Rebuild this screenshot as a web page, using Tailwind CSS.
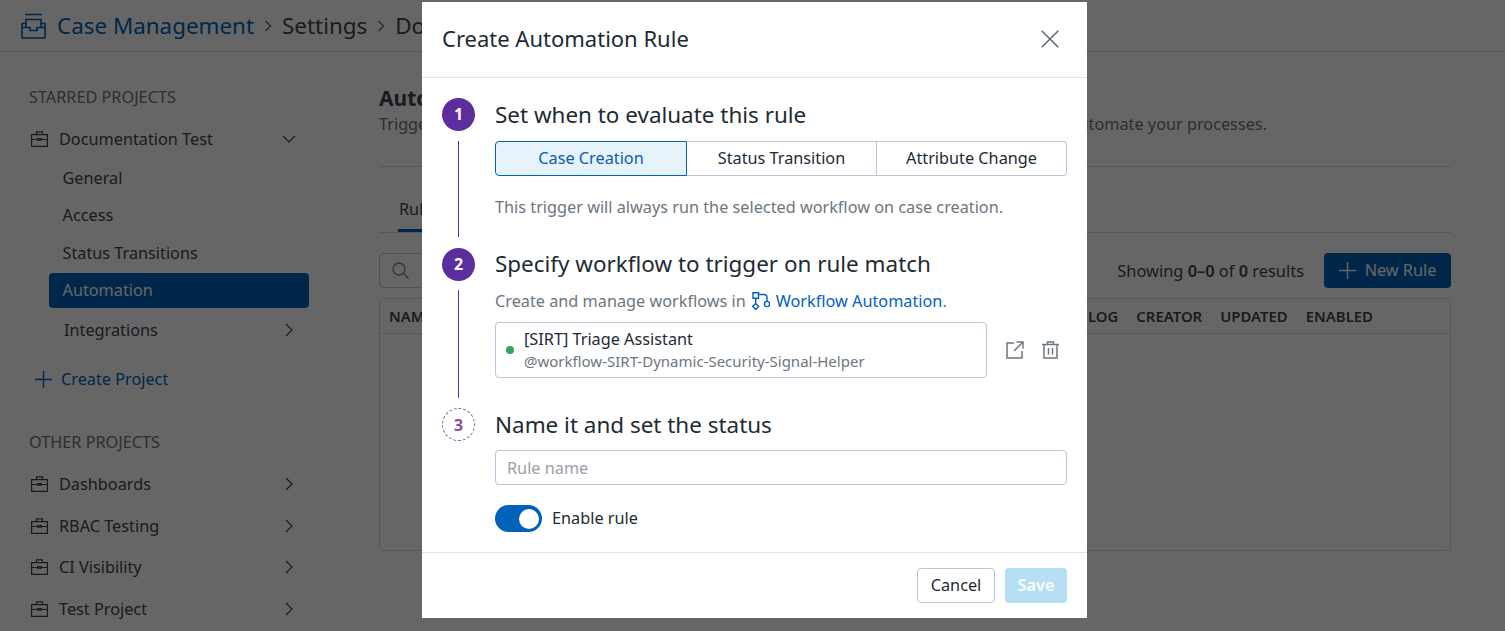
<!DOCTYPE html>
<html lang="en">
<head>
<meta charset="UTF-8">
<title>Create Automation Rule</title>
<script src="https://cdn.jsdelivr.net/npm/@tailwindcss/browser@4"></script>
</head>
<body class="relative h-[631px] overflow-hidden bg-white font-['Noto_Sans',sans-serif] text-[16.25px] text-[#3c4650]">
  <!-- Page header -->
  <header class="flex h-[52px] items-center border-b border-[#d8dbe6] pl-[21px] text-[22.4px]">
    <svg class="h-[26px] w-[25px] text-[#0062b8]" viewBox="0 0 25 26" fill="none" stroke="currentColor" stroke-width="1.6">
      <path d="M4 1.500h17M5 14V6.500h15V14M1 10.500V25h23V10.500H20M1 10.500h4M1 14.500h8v3h7v-3h8"/>
    </svg>
    <span class="ml-[11px] text-[#0062b8]">Case Management</span>
    <svg class="mx-[10px] h-3 w-2 text-[#5c6670]" viewBox="0 0 8 12" fill="none" stroke="currentColor" stroke-width="1.2"><path d="M1.500 1l5 5-5 5"/></svg>
    <span>Settings</span>
    <svg class="mx-[10px] h-3 w-2 text-[#5c6670]" viewBox="0 0 8 12" fill="none" stroke="currentColor" stroke-width="1.2"><path d="M1.500 1l5 5-5 5"/></svg>
    <span>Documentation Test</span>
  </header>

  <div class="flex">
    <!-- Sidebar -->
    <aside class="w-[379px] shrink-0 pl-[29px]">
      <div class="mt-[34px] h-[22px] leading-[22px] text-[#6b7580]">STARRED PROJECTS</div>
      <div class="mt-[12px] flex h-[38px] w-[267px] items-center pl-[2px]">
        <svg class="h-[16px] w-[17px] shrink-0" viewBox="0 0 17 16" fill="none" stroke="currentColor" stroke-width="1.2"><path d="M.6 3.600h15.800v11.800H.6zM5.500 3.600V.8h6v2.800M.6 8.500h6M10.400 8.500h6M6.600 7.600h3.800v1.600H6.600z"/></svg>
        <span class="ml-[11px] flex-1">Documentation Test</span>
        <svg class="h-2 w-3.5" viewBox="0 0 14 8" fill="none" stroke="currentColor" stroke-width="1.2"><path d="M1 1l6 6 6-6"/></svg>
      </div>
      <div class="mt-[2.5px] flex h-[35px] items-center pl-[33.5px]">General</div>
      <div class="mt-[2px] flex h-[35px] items-center pl-[33.5px]">Access</div>
      <div class="mt-[3px] flex h-[35px] items-center pl-[33.5px]">Status Transitions</div>
      <div class="ml-[20px] mt-[2.5px] flex h-[35px] w-[260px] items-center rounded-[4px] bg-[#0062b8] pb-[1px] pl-[13.5px] text-white">Automation</div>
      <div class="mt-[4px] flex h-[36px] w-[264px] items-center pl-[35px]">
        <span class="flex-1">Integrations</span>
        <svg class="h-3.5 w-2" viewBox="0 0 8 14" fill="none" stroke="currentColor" stroke-width="1.2"><path d="M1 1l6 6-6 6"/></svg>
      </div>
      <div class="mt-[13px] flex h-[36px] items-center pl-[6px] text-[#0062b8]">
        <svg class="h-[17px] w-[17px]" viewBox="0 0 17 17" fill="none" stroke="currentColor" stroke-width="1.4"><path d="M8.500 0v17M0 8.500h17"/></svg>
        <span class="ml-[9px]">Create Project</span>
      </div>
      <div class="mt-[34px] h-[22px] leading-[22px] text-[#6b7580]">OTHER PROJECTS</div>
      <div class="mt-[12px] flex h-[38px] w-[264px] items-center pl-[2px]">
        <svg class="h-[16px] w-[17px] shrink-0" viewBox="0 0 17 16" fill="none" stroke="currentColor" stroke-width="1.2"><path d="M.6 3.600h15.800v11.800H.6zM5.500 3.600V.8h6v2.800M.6 8.500h6M10.400 8.500h6M6.600 7.600h3.800v1.600H6.600z"/></svg>
        <span class="ml-[11px] flex-1">Dashboards</span>
        <svg class="h-3.5 w-2" viewBox="0 0 8 14" fill="none" stroke="currentColor" stroke-width="1.2"><path d="M1 1l6 6-6 6"/></svg>
      </div>
      <div class="mt-[4px] flex h-[38px] w-[264px] items-center pl-[2px]">
        <svg class="h-[16px] w-[17px] shrink-0" viewBox="0 0 17 16" fill="none" stroke="currentColor" stroke-width="1.2"><path d="M.6 3.600h15.800v11.800H.6zM5.500 3.600V.8h6v2.800M.6 8.500h6M10.400 8.500h6M6.600 7.600h3.800v1.600H6.600z"/></svg>
        <span class="ml-[11px] flex-1">RBAC Testing</span>
        <svg class="h-3.5 w-2" viewBox="0 0 8 14" fill="none" stroke="currentColor" stroke-width="1.2"><path d="M1 1l6 6-6 6"/></svg>
      </div>
      <div class="mt-[3px] flex h-[38px] w-[264px] items-center pl-[2px]">
        <svg class="h-[16px] w-[17px] shrink-0" viewBox="0 0 17 16" fill="none" stroke="currentColor" stroke-width="1.2"><path d="M.6 3.600h15.800v11.800H.6zM5.500 3.600V.8h6v2.800M.6 8.500h6M10.400 8.500h6M6.600 7.600h3.800v1.600H6.600z"/></svg>
        <span class="ml-[11px] flex-1">CI Visibility</span>
        <svg class="h-3.5 w-2" viewBox="0 0 8 14" fill="none" stroke="currentColor" stroke-width="1.2"><path d="M1 1l6 6-6 6"/></svg>
      </div>
      <div class="mt-[4px] flex h-[38px] w-[264px] items-center pl-[2px]">
        <svg class="h-[16px] w-[17px] shrink-0" viewBox="0 0 17 16" fill="none" stroke="currentColor" stroke-width="1.2"><path d="M.6 3.600h15.800v11.800H.6zM5.500 3.600V.8h6v2.800M.6 8.500h6M10.400 8.500h6M6.600 7.600h3.800v1.600H6.600z"/></svg>
        <span class="ml-[11px] flex-1">Test Project</span>
        <svg class="h-3.5 w-2" viewBox="0 0 8 14" fill="none" stroke="currentColor" stroke-width="1.2"><path d="M1 1l6 6-6 6"/></svg>
      </div>
    </aside>

    <!-- Main -->
    <main class="w-[1072px] shrink-0">
      <h1 class="mt-[32px] h-[28px] text-[21px] font-bold leading-[28px]">Automation Rules</h1>
      <div class="flex h-[24px] w-[888px] justify-between leading-[24px] text-[#6b7580]"><span>Trigger</span><span>automate your processes.</span></div>
      <div class="mt-[30px] border-b border-[#d8dbe6]"></div>
      <div class="flex h-[66px] items-end border-b border-[#d8dbe6] pl-[19px]">
        <div class="border-b-[3px] border-[#0062b8] px-px pb-[9px] leading-[22px]">Rules</div>
      </div>
      <div class="mt-[20px] flex items-center">
        <div class="flex h-[35px] w-[700px] items-center rounded-[4px] border border-[#c4cada] pl-[12px]">
          <svg class="h-[17px] w-[17px] text-[#7b858f]" viewBox="0 0 17 17" fill="none" stroke="currentColor" stroke-width="1.3"><circle cx="7" cy="7" r="6"/><path d="M11.500 11.500l5 5"/></svg>
        </div>
        <div class="ml-auto pt-[1px] text-[16.4px]">Showing <b class="font-semibold">0–0</b> of <b class="font-semibold">0</b> results</div>
        <div class="ml-[20px] flex h-[35px] w-[127px] items-center justify-center rounded-[4px] bg-[#0062b8] pb-[1px] text-white">
          <svg class="h-[17px] w-[17px]" viewBox="0 0 17 17" fill="none" stroke="currentColor" stroke-width="1.4"><path d="M8.500 0v17M0 8.500h17"/></svg>
          <span class="ml-[9px]">New Rule</span>
        </div>
      </div>
      <div class="mt-[10px] h-[253px] rounded-[4px] border border-[#d8dbe6]">
        <div class="flex h-[35px] items-center gap-[18px] border-b border-[#d8dbe6] pl-[9px] pr-[77px] text-[14.9px] font-semibold">
          <span class="flex-1">NAME</span><span>LOG</span><span>CREATOR</span><span>UPDATED</span><span>ENABLED</span>
        </div>
      </div>
    </main>
  </div>

  <!-- Overlay and modal -->
  <div class="absolute inset-0 bg-black/60"></div>
  <section class="absolute left-[422px] top-[2px] w-[665px] bg-white text-[#1c2b34]">
    <div class="flex h-[76px] items-center justify-between border-b border-[#e0e2ec] pb-[2px] pl-[20px] pr-[28px]">
      <h2 class="text-[22px]">Create Automation Rule</h2>
      <svg class="h-[18px] w-[18px] text-[#5c6670]" viewBox="0 0 18 18" fill="none" stroke="currentColor" stroke-width="1.5"><path d="M.7.7l16.600 16.600M17.300.7L.7 17.300"/></svg>
    </div>

    <div class="px-[20px] pt-[20px]">
      <!-- Step 1 -->
      <div class="flex gap-[20px]">
        <div class="flex w-[33px] flex-col items-center">
          <div class="flex h-[33px] w-[33px] shrink-0 items-center justify-center rounded-full bg-[#5c2d9c] pb-[1px] text-[16px] font-bold text-white">1</div>
          <div class="mb-[11px] mt-[10px] w-px flex-1 bg-[#5c2d9c]"></div>
        </div>
        <div class="flex-1 pb-[30px]">
          <h3 class="h-[33px] text-[22.45px] leading-[33px]">Set when to evaluate this rule</h3>
          <div class="mt-[10px] flex h-[35px] w-[572px]">
            <div class="flex w-[192px] items-center justify-center rounded-l-[4px] border border-[#0062b8] bg-[#e6f3fa] pb-[1px] text-[#0d5bb5]">Case Creation</div>
            <div class="flex w-[190px] items-center justify-center border-y border-r border-[#bcc5dc] pb-[1px]">Status Transition</div>
            <div class="flex w-[190px] items-center justify-center rounded-r-[4px] border-y border-r border-[#bcc5dc] pb-[1px]">Attribute Change</div>
          </div>
          <p class="mt-[20px] h-[22px] leading-[22px] text-[#6c7680]">This trigger will always run the selected workflow on case creation.</p>
        </div>
      </div>

      <!-- Step 2 -->
      <div class="flex gap-[20px]">
        <div class="flex w-[33px] flex-col items-center">
          <div class="flex h-[33px] w-[33px] shrink-0 items-center justify-center rounded-full bg-[#5c2d9c] pb-[2px] text-[16px] font-bold text-white">2</div>
          <div class="mb-[10px] mt-[9px] w-px flex-1 bg-[#5c2d9c]"></div>
        </div>
        <div class="flex-1 pb-[30px]">
          <h3 class="h-[33px] text-[22.45px] leading-[31px]">Specify workflow to trigger on rule match</h3>
          <p class="mt-[9px] flex h-[22px] items-center text-[#6c7680]">
            <span>Create and manage workflows in</span>
            <svg class="ml-[6px] h-[18px] w-[18px] text-[#0062c0]" viewBox="0 0 18 18" fill="none" stroke="currentColor" stroke-width="1.4"><path d="M1 .7h5.500v5.500H1zM3.700 6.200v5.200M6.500 2.500H12a3 3 0 013 3v3.800"/><circle cx="15" cy="12" r="2.600"/><path d="M3.700 11.400l3 3-3 3-3-3z"/></svg>
            <span class="ml-[6px] text-[#0062c0]">Workflow Automation</span><span>.</span>
          </p>
          <div class="mt-[10px] flex items-center">
            <div class="flex h-[56px] w-[492px] items-center rounded-[4px] border border-[#bcc5dc] pl-[10px]">
              <span class="h-2 w-2 rounded-full bg-[#2fa853]"></span>
              <div class="ml-[10px]">
                <div class="leading-[22px]">[SIRT] Triage Assistant</div>
                <div class="text-[15px] leading-[22px] text-[#6c7680]">@workflow-SIRT-Dynamic-Security-Signal-Helper</div>
              </div>
            </div>
            <svg class="ml-[19px] h-[18px] w-[18px] text-[#6c7680]" viewBox="0 0 18 18" fill="none" stroke="currentColor" stroke-width="1.5"><path d="M8 2H1v15h15v-7M10.500 1H17v6.500M17 1L8 10"/></svg>
            <svg class="ml-[18px] h-[18px] w-[17px] text-[#6c7680]" viewBox="0 0 17 18" fill="none" stroke="currentColor" stroke-width="1.5"><path d="M0 3.500h17M5.500 3.500V1h6v2.500M2 3.500V17h13V3.500M6.500 7v6.500M10.500 7v6.500"/></svg>
          </div>
        </div>
      </div>

      <!-- Step 3 -->
      <div class="flex gap-[20px]">
        <div class="w-[33px]">
          <div class="flex h-[33px] w-[33px] items-center justify-center rounded-full border border-dashed border-[#8e4ea8] text-[16px] font-bold text-[#8e4ea8]">3</div>
        </div>
        <div class="flex-1 pb-[20px]">
          <h3 class="h-[33px] text-[22.45px] leading-[33px]">Name it and set the status</h3>
          <input class="mt-[9px] block h-[35px] w-[572px] rounded-[4px] border border-[#bcc5dc] px-[11px] placeholder-[#9aa0a8]" placeholder="Rule name">
          <div class="mt-[20px] flex items-center">
            <div class="flex h-[27px] w-[47px] items-center justify-end rounded-full bg-[#0062b8] pr-[3.500px]">
              <div class="h-[20px] w-[20px] rounded-full bg-white"></div>
            </div>
            <span class="ml-[10px] pb-[1px]">Enable rule</span>
          </div>
        </div>
      </div>
    </div>

    <div class="flex h-[66px] items-center justify-end gap-[10px] border-t border-[#e0e2ec] pr-[20px]">
      <button class="h-[35px] w-[78px] rounded-[4px] border border-[#bcc5dc] pb-[1px]">Cancel</button>
      <button class="h-[35px] w-[62px] rounded-[4px] bg-[#b6dff3] pb-[1px] font-semibold text-white">Save</button>
    </div>
  </section>
</body>
</html>
